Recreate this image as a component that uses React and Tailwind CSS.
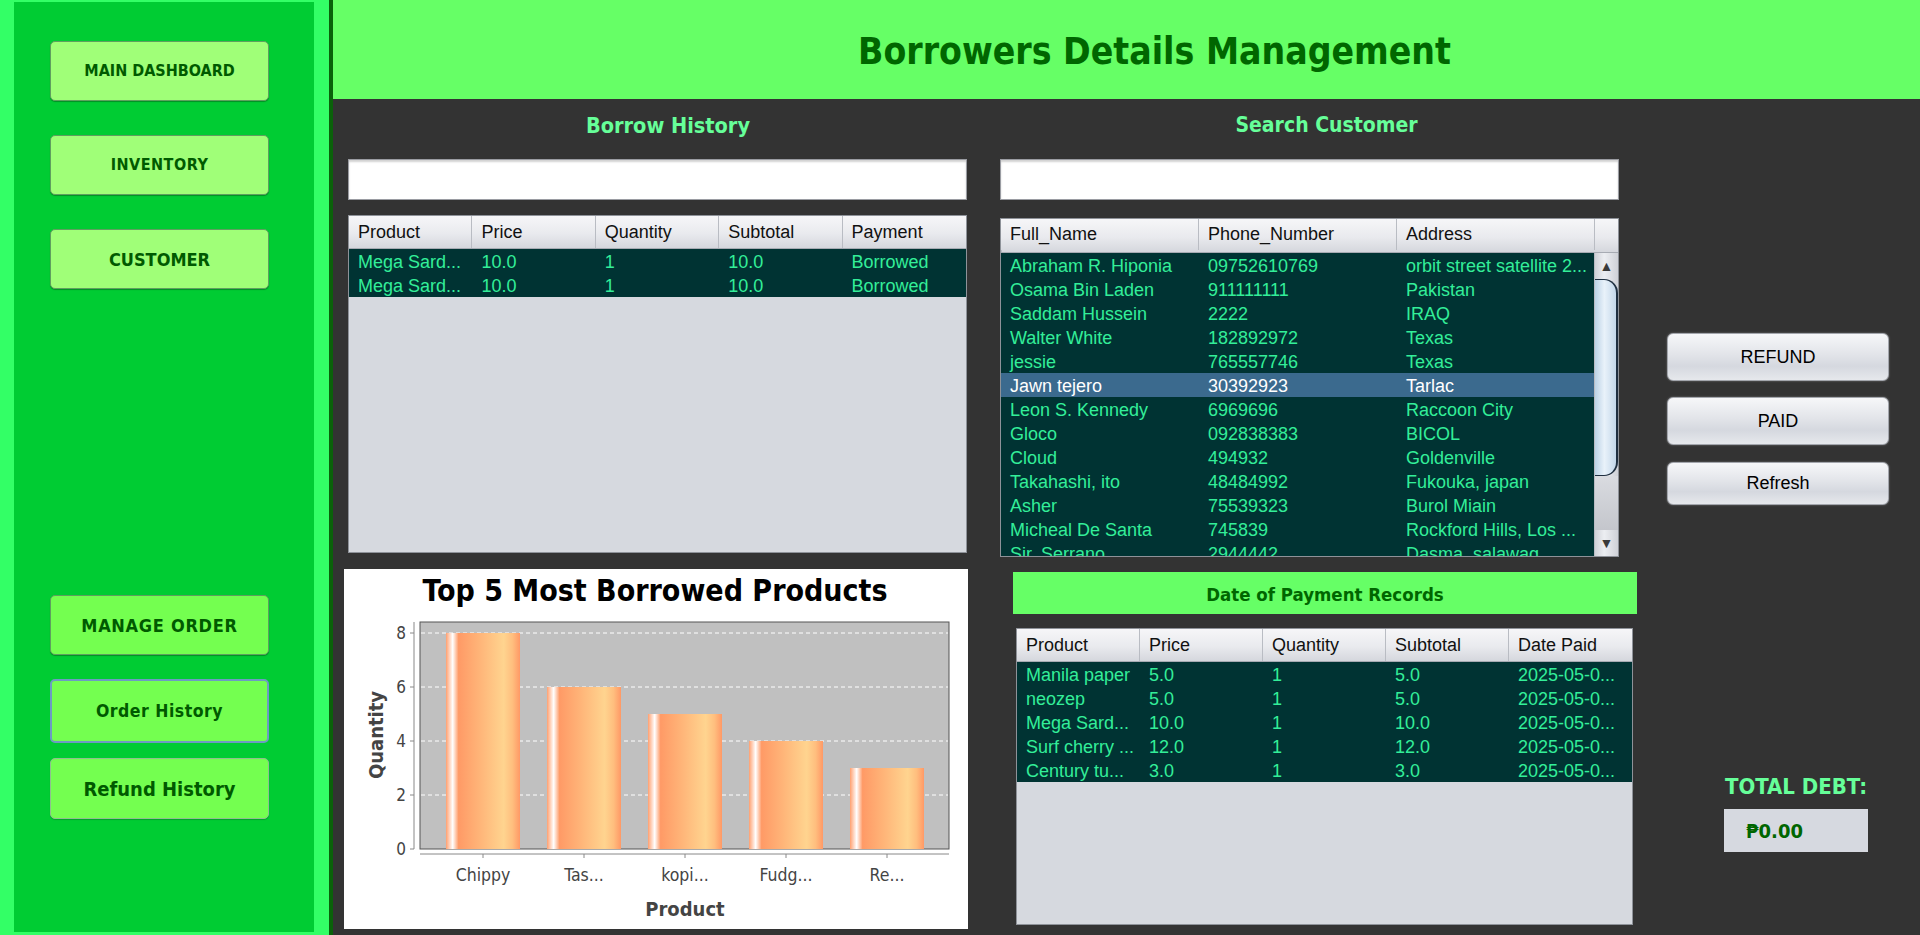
const tahoma = "font-['DejaVu_Sans_Condensed','DejaVu_Sans',sans-serif] font-stretch-condensed font-bold";
const arial = "font-['Liberation_Sans',Arial,sans-serif]";

function SideButton({ children, className, size }) {
  return (
    <div
      className={`ml-[36px] w-[219px] flex items-center justify-center rounded-[5px] text-[#005a00] ${tahoma} ${size} ${className}`}
    >
      {children}
    </div>
  );
}

function Sidebar() {
  return (
    <div className="w-[329px] h-[935px] bg-[#33ff66] pt-[2px] pl-[14px] pr-[15px] pb-[3px]">
      <div className="h-full bg-[#00cc33] flex flex-col">
        <SideButton size="text-[16px]" className="mt-[39px] h-[60px] bg-[#a0ff78] border border-[#5f9f5f] shadow-[0_1px_1px_rgba(0,0,0,0.3)]">
          MAIN DASHBOARD
        </SideButton>
        <SideButton size="text-[16px] tracking-[0.5px]" className="mt-[34px] h-[60px] bg-[#a0ff78] border border-[#5f9f5f] shadow-[0_1px_1px_rgba(0,0,0,0.3)]">
          INVENTORY
        </SideButton>
        <SideButton size="text-[18px]" className="mt-[34px] h-[60px] bg-[#a0ff78] border border-[#5f9f5f] shadow-[0_1px_1px_rgba(0,0,0,0.3)]">
          CUSTOMER
        </SideButton>
        <SideButton size="text-[18px] tracking-[0.7px]" className="mt-[306px] h-[60px] bg-[#74ff50] border border-[#5f9f5f] shadow-[0_1px_1px_rgba(0,0,0,0.3)]">
          MANAGE ORDER
        </SideButton>
        <SideButton size="text-[17.5px] tracking-[0.5px]" className="mt-[24px] h-[64px] bg-[#74ff50] border-2 border-[#6d9bc3]">
          Order History
        </SideButton>
        <SideButton size="text-[20px]" className="mt-[15px] h-[61px] bg-[#74ff50] border border-[#8fbf8f] shadow-[0_1px_1px_rgba(0,0,0,0.2)]">
          Refund History
        </SideButton>
      </div>
    </div>
  );
}

function SearchBox({ className }) {
  return (
    <div
      className={`h-[41px] bg-white border border-[#9a9ca2] shadow-[inset_0_2px_2px_rgba(0,0,0,0.18)] ${className}`}
    />
  );
}

function DataTable({ cols, grid, rows, height, headerH = 33, selected = -1, scroll = false }) {
  return (
    <div
      className={`flex flex-col border border-[#8e9299] bg-[#d6d9df] overflow-hidden ${arial} text-[18px]`}
      style={{ height }}
    >
      <div
        className={`grid ${grid} shrink-0 bg-[linear-gradient(to_bottom,#f6f6f8,#e9eaee_55%,#d5d7dd)] border-b border-[#a7abb3]`}
        style={{ height: headerH }}
      >
        {cols.map((c, i) => (
          <div key={i} className="flex items-center pl-[9px] pt-[1px] text-[#111] border-r border-[#b9bcc3] last:border-r-0 whitespace-nowrap overflow-hidden">
            {c}
          </div>
        ))}
        {scroll && <div className="border-l border-[#b9bcc3]" />}
      </div>
      <div className="flex flex-1 min-h-0">
        <div className="flex-1 min-w-0 overflow-hidden">
          {rows.map((r, i) => (
            <div
              key={i}
              className={`grid ${grid} h-[24px] ${i === selected ? "bg-[#3b6a8e] text-white" : "bg-[#003333] text-[#33ee99]"}`}
            >
              {r.map((v, j) => (
                <div key={j} className="flex items-center pl-[9px] pt-[2px] leading-none whitespace-nowrap overflow-hidden">
                  {v}
                </div>
              ))}
            </div>
          ))}
        </div>
        {scroll && <ScrollBar />}
      </div>
    </div>
  );
}

function ScrollBar() {
  return (
    <div className="w-[24px] flex flex-col bg-[linear-gradient(to_right,#d0d2d8,#eceef2_40%,#cfd1d7)] border-l border-[#b9bcc3]">
      <div className="h-[26px] flex items-center justify-center text-[#3a3a3a] text-[14px]">▲</div>
      <div className="h-[197px] rounded-r-[14px] border-r-2 border-y border-[#1f2f40] bg-[linear-gradient(to_right,#bcd2e6,#e9f2fa_45%,#c3d7ea)]" />
      <div className="flex-1 bg-[linear-gradient(to_bottom,#d9dbe0,#c4c6cc)]" />
      <div className="h-[26px] flex items-center justify-center text-[#3a3a3a] text-[14px]">▼</div>
    </div>
  );
}

function Chart() {
  const data = [
    ["Chippy", 8],
    ["Tas...", 6],
    ["kopi...", 5],
    ["Fudg...", 4],
    ["Re...", 3],
  ];
  const font = "DejaVu Sans Condensed, DejaVu Sans, sans-serif";
  const y = (v) => 280 - v * 27;
  return (
    <div className="w-[624px] h-[360px] bg-white">
      <svg width="624" height="360" viewBox="0 0 624 360">
        <defs>
          <linearGradient id="bar" x1="0" x2="1" y1="0" y2="0">
            <stop offset="0" stopColor="#ffa070" />
            <stop offset="0.09" stopColor="#ffffff" />
            <stop offset="0.17" stopColor="#ff9a66" />
            <stop offset="0.45" stopColor="#ffb478" />
            <stop offset="0.78" stopColor="#ffd48f" />
            <stop offset="0.9" stopColor="#ffbe7e" />
            <stop offset="1" stopColor="#ff9966" />
          </linearGradient>
        </defs>
        <text x="311" y="32" textAnchor="middle" fontFamily={font} fontStretch="condensed" fontWeight="bold" fontSize="30" fill="#000">
          Top 5 Most Borrowed Products
        </text>
        <rect x="76" y="53" width="529" height="227" fill="#c0c0c0" stroke="#555" strokeWidth="1" />
        {[2, 4, 6, 8].map((v) => (
          <line key={v} x1="77" x2="604" y1={y(v)} y2={y(v)} stroke="#fff" strokeWidth="1" strokeDasharray="4 3" />
        ))}
        {data.map(([n, v], i) => (
          <rect key={n} x={102 + i * 101} y={y(v)} width="74" height={v * 27} fill="url(#bar)" />
        ))}
        <line x1="70" x2="70" y1="53" y2="280" stroke="#888" />
        {[0, 2, 4, 6, 8].map((v) => (
          <g key={v}>
            <line x1="66" x2="70" y1={y(v)} y2={y(v)} stroke="#888" />
            <text x="62" y={y(v) + 6} textAnchor="end" fontFamily={font} fontStretch="condensed" fontSize="17" fill="#444">
              {v}
            </text>
          </g>
        ))}
        <line x1="76" x2="605" y1="285" y2="285" stroke="#888" />
        {data.map(([n], i) => (
          <g key={n}>
            <line x1={139 + i * 101} x2={139 + i * 101} y1="285" y2="289" stroke="#888" />
            <text x={139 + i * 101} y="312" textAnchor="middle" fontFamily={font} fontStretch="condensed" fontSize="17.5" fill="#444">
              {n}
            </text>
          </g>
        ))}
        <text x="341" y="347" textAnchor="middle" fontFamily={font} fontStretch="condensed" fontWeight="bold" fontSize="20" fill="#444">
          Product
        </text>
        <text transform="translate(39 166) rotate(-90)" textAnchor="middle" fontFamily={font} fontStretch="condensed" fontWeight="bold" fontSize="20" fill="#444">
          Quantity
        </text>
      </svg>
    </div>
  );
}

function GrayButton({ children, className }) {
  return (
    <div
      className={`w-[222px] flex items-center justify-center rounded-[6px] border border-[#a3a6ad] bg-[linear-gradient(to_bottom,#f6f7f9,#e2e4e9_45%,#d5d8df_70%,#e6e8ec)] shadow-[0_0_2px_rgba(255,255,255,0.35)] text-[18px] text-black ${arial} ${className}`}
    >
      {children}
    </div>
  );
}

export default function App() {
  const borrowRows = [
    ["Mega Sard...", "10.0", "1", "10.0", "Borrowed"],
    ["Mega Sard...", "10.0", "1", "10.0", "Borrowed"],
  ];
  const customers = [
    ["Abraham R. Hiponia", "09752610769", "orbit street satellite 2..."],
    ["Osama Bin Laden", "911111111", "Pakistan"],
    ["Saddam Hussein", "2222", "IRAQ"],
    ["Walter White", "182892972", "Texas"],
    ["jessie", "765557746", "Texas"],
    ["Jawn tejero", "30392923", "Tarlac"],
    ["Leon S. Kennedy", "6969696", "Raccoon City"],
    ["Gloco", "092838383", "BICOL"],
    ["Cloud", "494932", "Goldenville"],
    ["Takahashi, ito", "48484992", "Fukouka, japan"],
    ["Asher", "75539323", "Burol Miain"],
    ["Micheal De Santa", "745839", "Rockford Hills, Los ..."],
    ["Sir. Serrano", "2944442", "Dasma, salawag"],
  ];
  const payments = [
    ["Manila paper", "5.0", "1", "5.0", "2025-05-0..."],
    ["neozep", "5.0", "1", "5.0", "2025-05-0..."],
    ["Mega Sard...", "10.0", "1", "10.0", "2025-05-0..."],
    ["Surf cherry ...", "12.0", "1", "12.0", "2025-05-0..."],
    ["Century tu...", "3.0", "1", "3.0", "2025-05-0..."],
  ];

  return (
    <div className="flex w-[1920px] h-[935px] bg-[#333333] overflow-hidden">
      <Sidebar />
      <div className="w-[4px] h-full bg-[#0a620a]" />
      <div className="flex-1 flex flex-col">
        <div className="h-[99px] bg-[#66ff66] flex items-center justify-center pl-[56px] pt-[4px]">
          <h1 className={`text-[37px] text-[#006600] ${tahoma}`}>Borrowers Details Management</h1>
        </div>
        <div className="flex flex-1">
          {/* Borrow history + chart */}
          <div className="ml-[11px] w-[624px] flex flex-col">
            <div className={`h-[52px] flex items-center justify-center pl-[24px] pt-[2px] text-[21.5px] text-[#66ff99] ${tahoma}`}>
              Borrow History
            </div>
            <SearchBox className="mt-[8px] ml-[4px] w-[619px]" />
            <div className="mt-[15px] ml-[4px] w-[619px]">
              <DataTable
                cols={["Product", "Price", "Quantity", "Subtotal", "Payment"]}
                grid="grid-cols-5"
                rows={borrowRows}
                height={338}
              />
            </div>
            <div className="mt-[16px]">
              <Chart />
            </div>
          </div>

          {/* Customer search + payments */}
          <div className="ml-[32px] w-[637px] flex flex-col">
            <div className={`h-[52px] flex items-center justify-center pl-[16px] pt-[2px] text-[21px] text-[#66ff99] ${tahoma}`}>
              Search Customer
            </div>
            <SearchBox className="mt-[8px] w-[619px]" />
            <div className="mt-[18px] w-[619px]">
              <DataTable
                cols={["Full_Name", "Phone_Number", "Address"]}
                grid="grid-cols-[198px_198px_198px]"
                rows={customers}
                height={339}
                headerH={34}
                selected={5}
                scroll
              />
            </div>
            <div className={`mt-[15px] ml-[13px] w-[624px] h-[42px] bg-[#66ff66] flex items-center justify-center pt-[4px] text-[18.5px] text-[#006600] ${tahoma}`}>
              Date of Payment Records
            </div>
            <div className="mt-[14px] ml-[16px] w-[617px]">
              <DataTable
                cols={["Product", "Price", "Quantity", "Subtotal", "Date Paid"]}
                grid="grid-cols-5"
                rows={payments}
                height={297}
              />
            </div>
          </div>

          {/* Actions */}
          <div className="ml-[30px] w-[222px] flex flex-col">
            <GrayButton className="mt-[234px] h-[48px]">REFUND</GrayButton>
            <GrayButton className="mt-[16px] h-[48px]">PAID</GrayButton>
            <GrayButton className="mt-[17px] h-[43px]">Refresh</GrayButton>
            <div className={`mt-[269px] ml-[47px] w-[164px] flex justify-center whitespace-nowrap text-[22px] text-[#66ff99] leading-[26px] ${tahoma}`}>
              TOTAL DEBT:
            </div>
            <div className={`mt-[9px] ml-[57px] w-[144px] h-[43px] bg-[#d6d9e0] flex items-center pl-[22px] text-[20px] text-[#006600] ${tahoma}`}>
              ₱0.00
            </div>
          </div>
        </div>
      </div>
    </div>
  );
}
